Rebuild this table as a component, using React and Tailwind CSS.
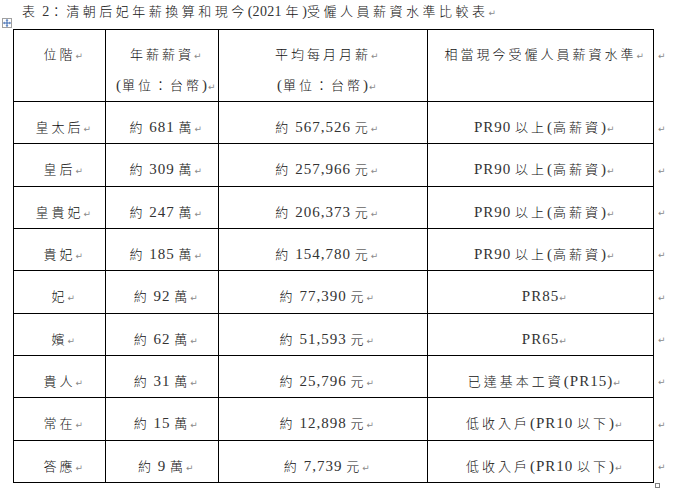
const CJK_RE = /[\u3000-\u303f\u3400-\u9fff\uff00-\uffef]/;

const rows = [
  ["皇太后", "約 681 萬", "約 567,526 元", "PR90 以上(高薪資)"],
  ["皇后", "約 309 萬", "約 257,966 元", "PR90 以上(高薪資)"],
  ["皇貴妃", "約 247 萬", "約 206,373 元", "PR90 以上(高薪資)"],
  ["貴妃", "約 185 萬", "約 154,780 元", "PR90 以上(高薪資)"],
  ["妃", "約 92 萬", "約 77,390 元", "PR85"],
  ["嬪", "約 62 萬", "約 51,593 元", "PR65"],
  ["貴人", "約 31 萬", "約 25,796 元", "已達基本工資(PR15)"],
  ["常在", "約 15 萬", "約 12,898 元", "低收入戶(PR10 以下)"],
  ["答應", "約 9 萬", "約 7,739 元", "低收入戶(PR10 以下)"],
];

// split text into CJK / latin runs so each gets its own font + size
const Txt = ({ s, title = false }) => {
  const runs = [];
  for (const ch of s) {
    const c = CJK_RE.test(ch);
    const last = runs[runs.length - 1];
    if (last && last.c === c) last.t += ch;
    else runs.push({ c, t: ch });
  }
  return runs.map((r, i) =>
    r.c ? (
      <span
        key={i}
        className={`font-['Noto_Sans_CJK_TC',sans-serif] font-light text-[#111] ${title ? "text-[13px] tracking-[3.5px]" : "text-[13px] tracking-[3px]"}`}
      >
        {r.t}
      </span>
    ) : (
      <span
        key={i}
        className={`font-['Liberation_Serif',serif] text-[#333] ${title ? "text-[14px] tracking-[0.3px]" : "text-[15px] tracking-[1px] [word-spacing:-1px]"}`}
      >
        {r.t}
      </span>
    )
  );
};

// Word paragraph mark
const Mark = () => (
  <span className="inline-block w-[7px] whitespace-nowrap font-['DejaVu_Sans',sans-serif] text-[9px] text-[#8a8a8a]">
    ↵
  </span>
);

const Line = ({ s, title }) => (
  <div className="whitespace-nowrap">
    <span className="inline-block w-[7px]" />
    <Txt s={s} title={title} />
    <Mark />
  </div>
);

const MoveHandle = () => (
  <div className="absolute left-[2px] top-[18px] w-[10px] h-[10px] border border-[#a0a0a0] bg-white flex items-center justify-center">
    <svg width="8" height="8" viewBox="0 0 8 8" fill="#3867b0">
      <rect x="3.5" y="1" width="1" height="6" />
      <rect x="1" y="3.5" width="6" height="1" />
      <path d="M4 0 L5.5 1.5 L2.5 1.5 Z" />
      <path d="M4 8 L5.5 6.5 L2.5 6.5 Z" />
      <path d="M0 4 L1.5 2.5 L1.5 5.5 Z" />
      <path d="M8 4 L6.5 2.5 L6.5 5.5 Z" />
    </svg>
  </div>
);

const cell = "border border-black text-center align-top leading-[28px]";

export default function App() {
  return (
    <div className="relative w-[677px] h-[493px] bg-white overflow-hidden text-[#111]">
      <MoveHandle />

      {/* caption */}
      <div className="h-[20px] leading-[20px] pl-[15px]">
        <Line s="表 2：清朝后妃年薪換算和現今(2021 年)受僱人員薪資水準比較表" title />
      </div>

      <table className="ml-[13px] mt-[9px] border-collapse table-fixed">
        <colgroup>
          <col className="w-[92px]" />
          <col className="w-[113px]" />
          <col className="w-[209px]" />
          <col className="w-[226px]" />
          <col className="w-[20px]" />
        </colgroup>
        <tbody>
          <tr>
            <td className={`${cell} h-[70px] pt-[9px]`}>
              <Line s="位階" />
            </td>
            <td className={`${cell} h-[70px] pt-[9px]`}>
              <Line s="年薪薪資" />
              <Line s="(單位：台幣)" />
            </td>
            <td className={`${cell} h-[70px] pt-[9px]`}>
              <Line s="平均每月月薪" />
              <Line s="(單位：台幣)" />
            </td>
            <td className={`${cell} h-[70px] pt-[9px]`}>
              <Line s="相當現今受僱人員薪資水準" />
            </td>
            <td className="align-top pt-[9px] pl-[4px] leading-[28px]">
              <Mark />
            </td>
          </tr>
          {rows.map((r) => (
            <tr key={r[0]}>
              {r.map((v, i) => (
                <td key={i} className={`${cell} h-[42.33px] pt-[10px]`}>
                  <Line s={v} />
                </td>
              ))}
              <td className="align-top pt-[10px] pl-[4px] leading-[28px]">
                <Mark />
              </td>
            </tr>
          ))}
        </tbody>
      </table>

      {/* table resize handle */}
      <div className="absolute left-[655px] top-[483px] w-[5px] h-[5px] border border-[#808080]" />
    </div>
  );
}
